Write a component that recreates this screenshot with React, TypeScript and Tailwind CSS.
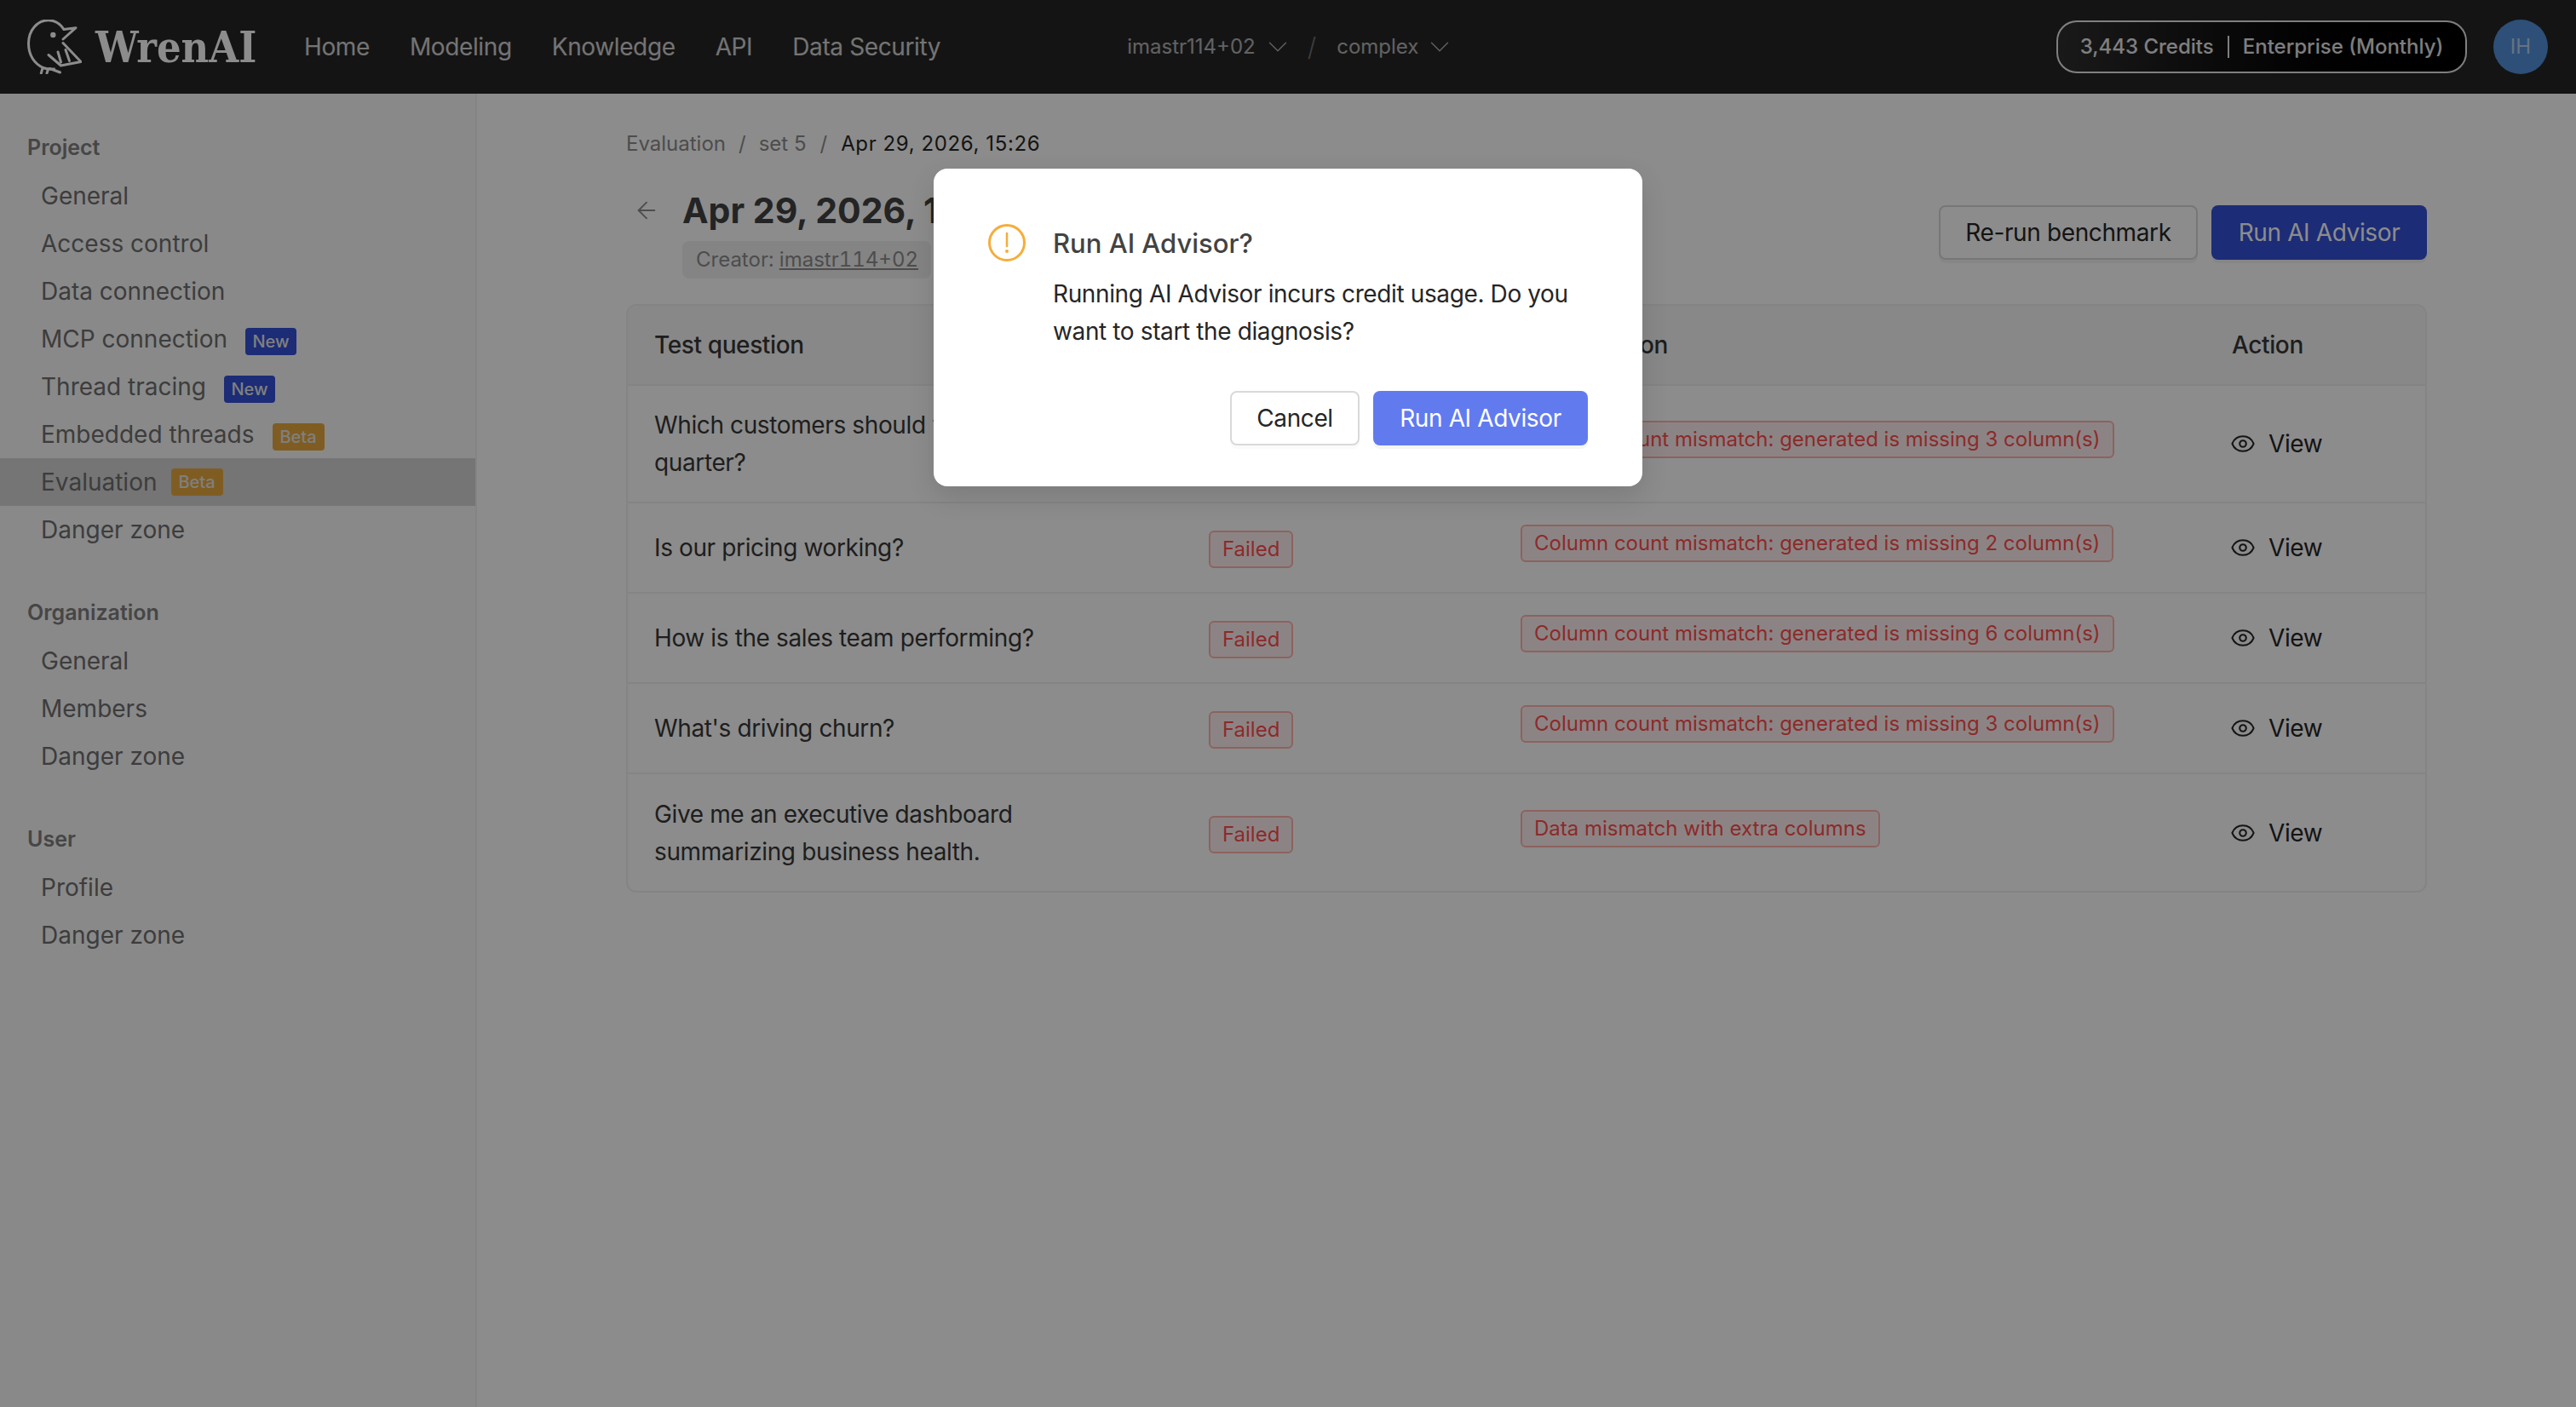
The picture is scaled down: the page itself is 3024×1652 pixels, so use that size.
import { ArrowLeft, ChevronDown, Eye } from "lucide-react";

type NavItem = { label: string; badge?: "New" | "Beta"; active?: boolean };

const sections: { title: string; items: NavItem[] }[] = [
  {
    title: "Project",
    items: [
      { label: "General" },
      { label: "Access control" },
      { label: "Data connection" },
      { label: "MCP connection", badge: "New" },
      { label: "Thread tracing", badge: "New" },
      { label: "Embedded threads", badge: "Beta" },
      { label: "Evaluation", badge: "Beta", active: true },
      { label: "Danger zone" },
    ],
  },
  {
    title: "Organization",
    items: [{ label: "General" }, { label: "Members" }, { label: "Danger zone" }],
  },
  {
    title: "User",
    items: [{ label: "Profile" }, { label: "Danger zone" }],
  },
];

const rows = [
  {
    question: "Which customers should we prioritize this quarter?",
    reason: "Column count mismatch: generated is missing 3 column(s)",
    height: "h-[138px]",
  },
  {
    question: "Is our pricing working?",
    reason: "Column count mismatch: generated is missing 2 column(s)",
    height: "h-[106px]",
  },
  {
    question: "How is the sales team performing?",
    reason: "Column count mismatch: generated is missing 6 column(s)",
    height: "h-[106px]",
  },
  {
    question: "What's driving churn?",
    reason: "Column count mismatch: generated is missing 3 column(s)",
    height: "h-[106px]",
  },
  {
    question: "Give me an executive dashboard summarizing business health.",
    reason: "Data mismatch with extra columns",
    height: "h-[138px]",
  },
];

const WrenLogo = () => (
  <svg viewBox="0 0 64 64" className="h-[64px] w-[64px] shrink-0" fill="none" stroke="#ffffff" strokeWidth="3" strokeLinejoin="round" strokeLinecap="round">
    <path d="M43 11.5C38 4 31 .8 25 .8 12 .8 1.5 12 1.5 28c0 14 7 24 17 28.5 4 1.6 9 2 13 1.6" />
    <path d="M43 11.5l14-1.8L42 23" />
    <path d="M42 27.5l21 22-23.5 4.5L25 41.5" />
    <path d="M36 38l3.5 12M45 35.5l4.5 13" />
    <path d="M18 57l-1.7 6M24.7 58L23 63M26.5 57.5l12 4.5" />
    <circle cx="30.3" cy="18" r="3.2" fill="#ffffff" stroke="none" />
  </svg>
);

const Sidebar = () => (
  <aside className="w-[560px] shrink-0 border-r-2 border-[#f0f0f0] bg-[#f9f9f9] pt-[42px]">
    {sections.map((section) => (
      <div key={section.title} className="mb-[48px]">
        <div className="mb-[6px] flex h-[44px] items-center pl-[32px] text-[25px] font-semibold text-[#808080]">
          {section.title}
        </div>
        {section.items.map((item) => (
          <div
            key={item.label}
            className={`flex h-[56px] items-center pl-[48px] text-[28px] text-[#6f6f6f] ${item.active ? "w-[558px] gap-[16px] bg-[#d6d6d6]" : "gap-[21px]"}`}
          >
            {item.label}
            {item.badge && (
              <span
                className={`flex h-[32px] items-center justify-center rounded-[4px] text-[20px] font-medium text-[#e8e8e8] ${item.active ? "" : "mt-[6px]"} ${item.badge === "New" ? "w-[60px] bg-[#3350d8]" : "w-[61px] bg-[#e8a93f]"}`}
              >
                {item.badge}
              </span>
            )}
          </div>
        ))}
      </div>
    ))}
  </aside>
);

const EvaluationTable = () => (
  <div className="mt-[30px] overflow-hidden rounded-[12px] border-2 border-[#f0f0f0]">
    <table className="w-full table-fixed border-collapse text-left text-[28px] tracking-[-0.38px] text-[#383838]">
      <colgroup>
        <col className="w-[651px]" />
        <col className="w-[365px]" />
        <col className="w-[836px]" />
        <col />
      </colgroup>
      <thead>
        <tr className="h-[93px] border-b-2 border-[#f0f0f0] bg-[#f8f8f8]">
          <th className="pl-[31px] font-medium">Test question</th>
          <th className="pl-[31px] font-medium">Status</th>
          <th className="pl-[31px] font-medium">Failed reason</th>
          <th className="pl-[31px] font-medium">Action</th>
        </tr>
      </thead>
      <tbody>
        {rows.map((row) => (
          <tr key={row.question} className={`${row.height} border-b-2 border-[#f0f0f0] last:border-b-0`}>
            <td className="py-0 pl-[31px] pr-[60px] leading-[44px]">{row.question}</td>
            <td className="pl-[31px]">
              <span className="mt-[4px] inline-flex h-[44px] items-center rounded-[6px] border-2 border-[#ffb3ae] bg-[#fff1f0] px-[14px] align-middle text-[24px] tracking-normal text-[#ff4d4f]">
                Failed
              </span>
            </td>
            <td className="pl-[32px]">
              <span className="mb-[10px] inline-flex h-[44px] items-center rounded-[6px] border-2 border-[#ffb3ae] bg-[#fff1f0] px-[14px] align-middle text-[24px] tracking-normal whitespace-nowrap text-[#ff4d4f]">
                {row.reason}
              </span>
            </td>
            <td className="pl-[31px]">
              <span className="flex items-center gap-[15px] text-[#262626]">
                <Eye className="-ml-[2px] h-[30px] w-[30px]" strokeWidth={1.7} />
                View
              </span>
            </td>
          </tr>
        ))}
      </tbody>
    </table>
  </div>
);

const RunDialog = () => (
  <div className="absolute inset-0 flex justify-center bg-black/45 pt-[198px]">
    <div className="h-[373px] w-[832px] rounded-[16px] bg-white px-[64px] pb-[48px] pt-[64px] shadow-[0_12px_32px_rgba(0,0,0,0.12)]">
      <div className="flex items-center gap-[32px]">
        <svg viewBox="0 0 44 44" className="h-[44px] w-[44px] shrink-0" fill="none">
          <circle cx="22" cy="22" r="20.5" stroke="#f5ad3b" strokeWidth="3" />
          <path d="M22 11v15" stroke="#f5ad3b" strokeWidth="2.5" strokeLinecap="round" />
          <circle cx="22" cy="32" r="2" fill="#f5ad3b" />
        </svg>
        <h2 className="pt-[2px] text-[31px] leading-[44px] font-medium text-[#434343]">Run AI Advisor?</h2>
      </div>
      <p className="mt-[15px] pl-[76px] text-[28px] leading-[44px] tracking-[-0.38px] text-[#262626]">
        Running AI Advisor incurs credit usage. Do you want to start the diagnosis?
      </p>
      <div className="mt-[48px] flex justify-end gap-[16px] tracking-[-0.38px]">
        <button className="h-[64px] w-[152px] rounded-[8px] border-2 border-[#d9d9d9] bg-white text-[28px] text-[#262626] shadow-[0_4px_0_rgba(0,0,0,0.02)]">
          Cancel
        </button>
        <button className="h-[64px] w-[252px] rounded-[8px] bg-[#617bef] text-[28px] text-white shadow-[0_4px_0_rgba(0,0,0,0.04)]">
          Run AI Advisor
        </button>
      </div>
    </div>
  </div>
);

export default function App() {
  return (
    <div className="relative flex h-[1652px] w-[3024px] flex-col overflow-hidden bg-white font-['Inter',sans-serif]">
      <header className="flex h-[110px] shrink-0 items-center bg-[#262626] pl-[32px] pr-[33px] text-white">
        <WrenLogo />
        <span className="ml-[16px] w-[245px] font-['DejaVu_Serif_Condensed','DejaVu_Serif',serif] text-[50px] font-bold">WrenAI</span>
        <nav className="flex items-center gap-[47px] text-[28px] tracking-[-0.38px] text-white/80">
          <span>Home</span>
          <span>Modeling</span>
          <span>Knowledge</span>
          <span>API</span>
          <span>Data Security</span>
        </nav>
        <div className="ml-[219px] flex items-center text-[24px] text-white/65">
          <span>imastr114+02</span>
          <ChevronDown className="ml-[7px] h-[38px] w-[38px]" strokeWidth={0.8} />
          <span className="ml-[16px] mr-[24px] text-[30px] font-light text-white/35">/</span>
          <span>complex</span>
          <ChevronDown className="ml-[6px] h-[38px] w-[38px]" strokeWidth={0.8} />
        </div>
        <div className="ml-auto flex h-[62px] w-[482px] items-center justify-center gap-[16px] rounded-[24px] border-2 border-white/90 bg-gradient-to-r from-[#2f2f2f] to-[#000000] text-[24px] font-medium text-white/90">
          <span>3,443 Credits</span>
          <span className="h-[26px] w-[2px] bg-white/90" />
          <span>Enterprise (Monthly)</span>
        </div>
        <div className="ml-[31px] flex h-[64px] w-[64px] items-center justify-center rounded-full bg-[#5291da] text-[24px] text-white/60">
          IH
        </div>
      </header>
      <div className="flex min-h-0 flex-1">
        <Sidebar />
        <main className="flex-1 pt-[41px]">
          <div className="mx-auto w-[2114px]">
            <div className="flex h-[36px] items-center text-[24px] text-[#8c8c8c]">
              <span>Evaluation</span>
              <span className="mx-[15px]">/</span>
              <span>set 5</span>
              <span className="mx-[16px]">/</span>
              <span className="tracking-[0.6px] text-[#262626]">Apr 29, 2026, 15:26</span>
            </div>
            <div className="mt-[32px] flex items-center justify-between">
              <div className="flex">
                <ArrowLeft className="ml-[8px] mt-[12px] h-[32px] w-[32px] text-[#8c8c8c]" strokeWidth={1.4} />
                <div className="ml-[26px]">
                  <h1 className="h-[56px] text-[41px] leading-[56px] font-bold text-[#434343]">Apr 29, 2026, 15:26</h1>
                  <div className="mt-[8px] flex h-[44px] w-[292px] items-center rounded-[8px] bg-[#f0f0f0] pl-[16px] text-[24px] text-[#8c8c8c] tabular-nums">
                    Creator:&nbsp;<span className="underline">imastr114+02</span>
                  </div>
                </div>
              </div>
              <div className="flex gap-[16px] tracking-[-0.38px]">
                <button className="h-[64px] w-[304px] rounded-[8px] border-2 border-[#d9d9d9] bg-white text-[28px] text-[#262626] shadow-[0_4px_0_rgba(0,0,0,0.04)]">
                  Re-run benchmark
                </button>
                <button className="h-[64px] w-[253px] rounded-[8px] bg-[#3350d8] text-[28px] text-white shadow-[0_4px_0_rgba(0,0,0,0.04)]">
                  Run AI Advisor
                </button>
              </div>
            </div>
            <EvaluationTable />
          </div>
        </main>
      </div>
      <RunDialog />
    </div>
  );
}
